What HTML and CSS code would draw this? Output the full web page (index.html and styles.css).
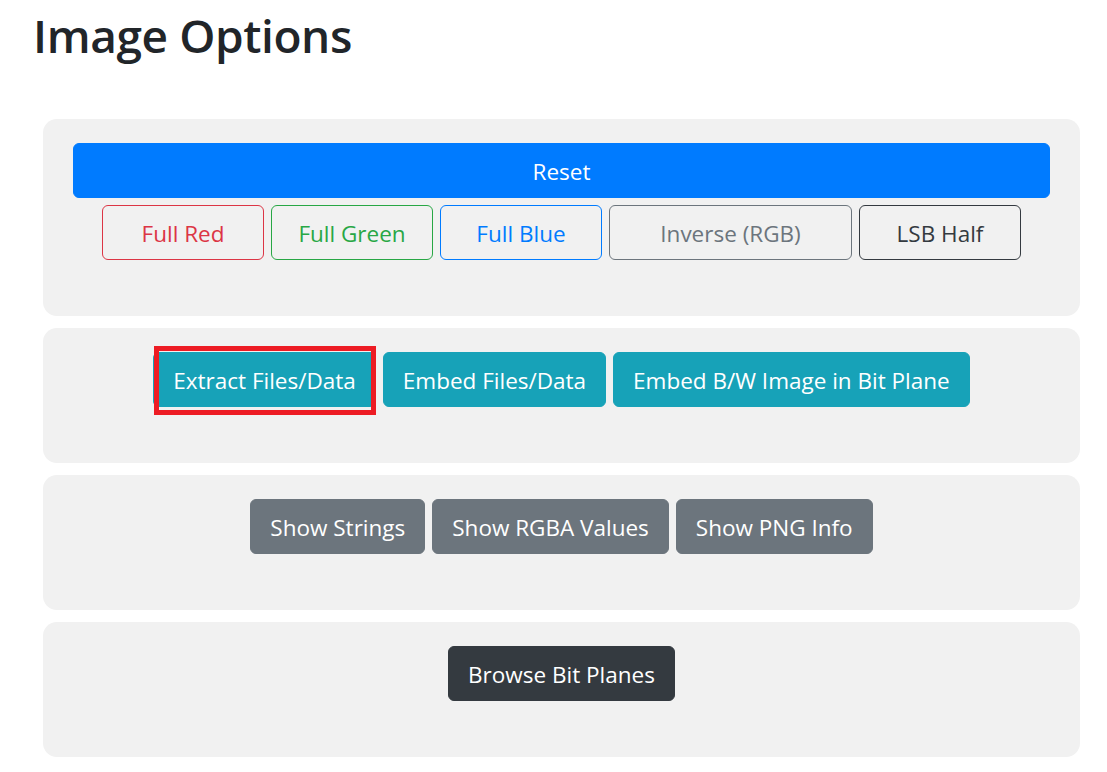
FILE: index.html
```html
<!DOCTYPE html>
<html lang="en">
<head>
<meta charset="utf-8">
<title>Image Options</title>
<link rel="stylesheet" href="styles.css">
</head>
<body>
<main class="page">
  <h1 class="title">Image Options</h1>
  <section class="panel">
    <button class="btn btn-primary btn-block">Reset</button>
    <div class="row">
      <button class="btn btn-outline red w162">Full Red</button>
      <button class="btn btn-outline green w162">Full Green</button>
      <button class="btn btn-outline blue w162">Full Blue</button>
      <button class="btn btn-outline gray w243">Inverse (RGB)</button>
      <button class="btn btn-outline dark w162">LSB Half</button>
    </div>
  </section>
  <section class="panel">
    <div class="row first">
      <span class="highlight"><button class="btn btn-info">Extract Files/Data</button></span>
      <button class="btn btn-info">Embed Files/Data</button>
      <button class="btn btn-info">Embed B/W Image in Bit Plane</button>
    </div>
  </section>
  <section class="panel">
    <div class="row first">
      <button class="btn btn-secondary">Show Strings</button>
      <button class="btn btn-secondary">Show RGBA Values</button>
      <button class="btn btn-secondary">Show PNG Info</button>
    </div>
  </section>
  <section class="panel">
    <div class="row first">
      <button class="btn btn-dark">Browse Bit Planes</button>
    </div>
  </section>
</main>
</body>
</html>
```

FILE: styles.css
```css
*, *::before, *::after { box-sizing: border-box; }
html, body { margin: 0; padding: 0; background: #fff; }
body {
  font-family: "Open Sans", "Noto Sans", "Liberation Sans", sans-serif;
  color: #212529;
}
.page {
  padding: 0 27px 0 43px;
}
.title {
  margin: 0 0 0 -10px;
  padding-top: 3px;
  height: 119px;
  font-size: 46px;
  font-weight: 600;
  line-height: 64px;
  color: #212529;
  letter-spacing: -0.4px;
}
.panel {
  background: #f1f1f1;
  border-radius: 14px;
  padding: 24px 30px 56px;
  margin-bottom: 12px;
}
.row {
  display: flex;
  justify-content: center;
  gap: 7px;
  margin-top: 7px;
}
.row.first { margin-top: 0; }
.btn {
  display: inline-flex;
  align-items: center;
  justify-content: center;
  height: 55px;
  padding: 4px 19px 0;
  border: 1px solid transparent;
  border-radius: 6px;
  font-family: inherit;
  font-size: 22.5px;
  font-weight: 400;
  line-height: 1;
  background: transparent;
  white-space: nowrap;
  cursor: pointer;
}
.btn-block { width: 100%; }
.btn-primary { background: #007bff; border-color: #007bff; color: #fff; }
.btn-info { background: #17a2b8; border-color: #17a2b8; color: #fff; }
.btn-secondary { background: #6c757d; border-color: #6c757d; color: #fff; }
.btn-dark { background: #343a40; border-color: #343a40; color: #fff; }
.btn-outline { background: transparent; }
.red { color: #dc3545; border-color: #dc3545; }
.green { color: #28a745; border-color: #28a745; }
.blue { color: #007bff; border-color: #007bff; }
.gray { color: #6c757d; border-color: #6c757d; }
.dark { color: #343a40; border-color: #343a40; }
.w162 { width: 162px; }
.w243 { width: 243px; }
.highlight {
  position: relative;
  display: inline-flex;
}
.highlight::after {
  content: "";
  position: absolute;
  left: 1px;
  top: -6px;
  width: 222px;
  height: 69px;
  border: 5px solid #ed1c24;
  pointer-events: none;
}
```
